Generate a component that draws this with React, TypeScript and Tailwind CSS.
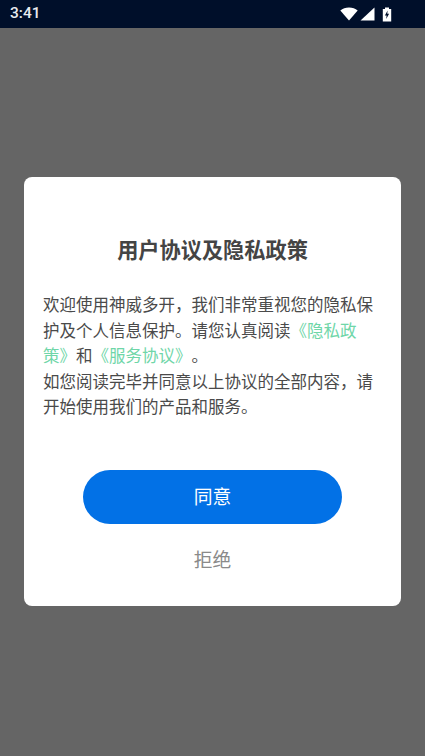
const CJK = 'font-["Noto_Sans_CJK_SC","Noto_Sans",sans-serif]'

function StatusIcons() {
  return (
    <div className="flex items-center">
      <svg width="18" height="14" viewBox="0 0 18 14">
        <path d="M0.3 3.4C2.6 1.5 5.6 0.5 9 0.5s6.4 1 8.7 2.9L9 13.5z" fill="#ffffff" />
      </svg>
      <svg width="15" height="14" viewBox="0 0 15 14" className="ml-[2px]">
        <path d="M14.5 0.5V13.5H0.5z" fill="#ffffff" />
      </svg>
      <svg width="10" height="15" viewBox="0 0 10 15" className="ml-[7px]">
        <path d="M3 0.5h4v1.5h2.2v12.5H0.8V2H3z" fill="#ffffff" />
        <path d="M5.6 3.4L2.9 8.4h1.7L4.2 12l2.9-5.2H5.3z" fill="#000f2a" />
      </svg>
    </div>
  )
}

export default function App() {
  return (
    <div lang="zh-CN" className={`flex h-[756px] w-[425px] flex-col overflow-hidden bg-[#656565] ${CJK}`}>
      <div className="flex h-[28px] items-center justify-between bg-[#000f2a] pl-[10px] pr-[33px]">
        <span className="font-['Roboto',sans-serif] text-[15.5px] font-medium text-[#e8eaee]">3:41</span>
        <StatusIcons />
      </div>

      <div className="mx-[24px] mt-[149px] flex h-[429px] flex-col rounded-[8px] bg-white">
        <h1 className="mt-[54px] text-center text-[21.2px] font-bold leading-[36px] text-[#444444]">
          用户协议及隐私政策
        </h1>

        <p className="mx-[19px] mt-[25px] text-[16.5px] leading-[25.5px] text-[#4a4a4a] [font-feature-settings:'chws'_0] [text-spacing-trim:space-all]">
          欢迎使用神威多开，我们非常重视您的隐私保
          <br />
          护及个人信息保护。请您认真阅读
          <span className="text-[#6fd6a8]">《隐私政<br />策》</span>和
          <span className="text-[#6fd6a8]">《服务协议》</span>。
          <br />
          如您阅读完毕并同意以上协议的全部内容，请
          <br />
          开始使用我们的产品和服务。
        </p>

        <button className="mx-auto mt-[50px] h-[54px] w-[259px] rounded-full bg-[#0271e6] text-[18.8px] text-white">
          同意
        </button>
        <button className="mx-auto mt-[18px] h-[36px] w-[259px] text-[18.8px] text-[#8a8a8a]">
          拒绝
        </button>
      </div>
    </div>
  )
}
